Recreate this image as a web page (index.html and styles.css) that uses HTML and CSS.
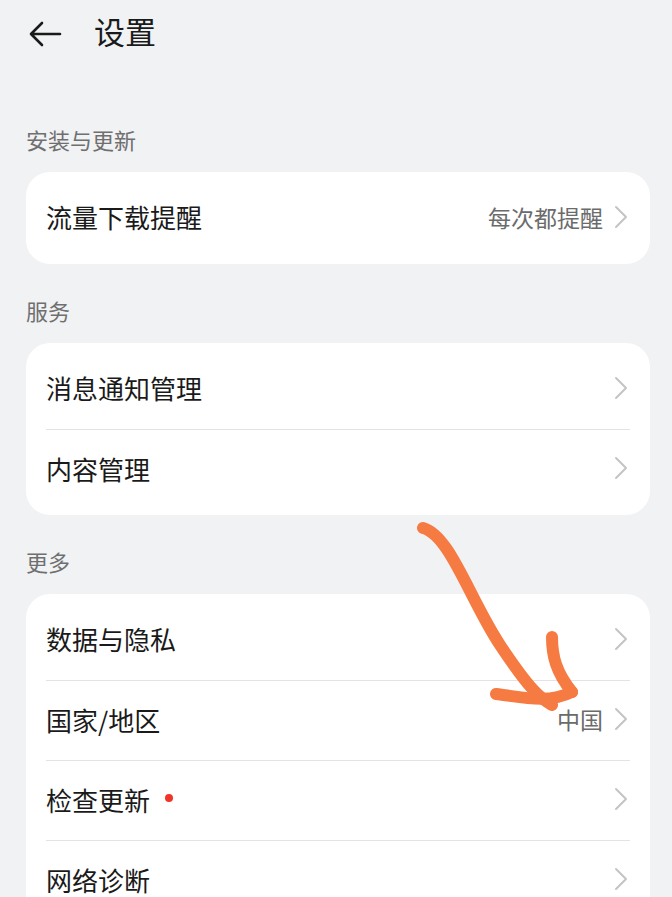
FILE: index.html
```html
<!DOCTYPE html>
<html>
<head>
    <title>设置</title>
    <link rel="stylesheet" href="styles.css">
</head>
<body>
    <div class="header">
        <svg class="back" width="34" height="26" viewBox="0 0 34 26">
            <path d="M32 13 H3 M14 2 L3 13 L14 24" fill="none" stroke="#1a1a1a" stroke-width="2.6" stroke-linecap="round" stroke-linejoin="round"/>
        </svg>
        <span class="title">设置</span>
    </div>

    <div class="section-label">安装与更新</div>
    <div class="card">
        <div class="row">
            <span class="row-text">流量下载提醒</span>
            <span class="row-value">每次都提醒</span>
            <svg class="chevron" width="16" height="24" viewBox="0 0 16 24"><path d="M3 2 L13 12 L3 22" /></svg>
        </div>
    </div>

    <div class="section-label">服务</div>
    <div class="card">
        <div class="row">
            <span class="row-text">消息通知管理</span>
            <svg class="chevron" width="16" height="24" viewBox="0 0 16 24"><path d="M3 2 L13 12 L3 22" /></svg>
        </div>
        <div class="row">
            <span class="row-text">内容管理</span>
            <svg class="chevron" width="16" height="24" viewBox="0 0 16 24"><path d="M3 2 L13 12 L3 22" /></svg>
        </div>
    </div>

    <div class="section-label">更多</div>
    <div class="card">
        <div class="row">
            <span class="row-text">数据与隐私</span>
            <svg class="chevron" width="16" height="24" viewBox="0 0 16 24"><path d="M3 2 L13 12 L3 22" /></svg>
        </div>
        <div class="row">
            <span class="row-text">国家/地区</span>
            <span class="row-value">中国</span>
            <svg class="chevron" width="16" height="24" viewBox="0 0 16 24"><path d="M3 2 L13 12 L3 22" /></svg>
        </div>
        <div class="row">
            <span class="row-text">检查更新<span class="red-dot"></span></span>
            <svg class="chevron" width="16" height="24" viewBox="0 0 16 24"><path d="M3 2 L13 12 L3 22" /></svg>
        </div>
        <div class="row">
            <span class="row-text">网络诊断</span>
            <svg class="chevron" width="16" height="24" viewBox="0 0 16 24"><path d="M3 2 L13 12 L3 22" /></svg>
        </div>
    </div>

    <!-- hand drawn annotation on top of the screenshot -->
    <svg class="scribble" width="672" height="897" viewBox="0 0 672 897">
        <path d="M423 528 C 450 535, 470 600, 500 645 S 540 698, 552 705" />
        <path d="M552 637 C 552 656, 556 672, 572 692" />
        <path d="M496 694 C 522 697, 548 704, 572 692" />
    </svg>
</body>
</html>
```

FILE: styles.css
```css
body {
    font-family: "Noto Sans CJK SC", "Noto Sans", sans-serif;
    background-color: #f1f2f4;
    margin: 0;
    padding: 0;
    overflow: hidden;
}

.header {
    display: flex;
    align-items: center;
    height: 68px;
    padding-left: 28px;
    margin-bottom: 25px;
}

.back {
    display: block;
}

.title {
    font-size: 31px;
    line-height: 36px;
    color: #1a1a1a;
    margin-left: 32px;
    padding-bottom: 7px;
}

.section-label {
    margin-left: 26px;
    padding-top: 31px;
    padding-bottom: 18px;
    font-size: 22px;
    line-height: 30px;
    color: #6f6f6f;
}

.card {
    background-color: white;
    border-radius: 24px;
    margin-left: 26px;
    width: 624px;
    padding: 6px 0;
}

.row {
    display: flex;
    align-items: center;
    height: 80px;
    margin: 0 20px;
    padding-bottom: 3px;
    border-top: 1px solid #e3e3e3;
    box-sizing: border-box;
}

.row:first-child {
    border-top: none;
}

.row-text {
    font-size: 26px;
    color: #1a1a1a;
    margin-right: auto;
    display: flex;
    align-items: center;
}

.row-value {
    font-size: 23px;
    color: #6b6b6b;
    margin-right: 10px;
}

.red-dot {
    width: 8px;
    height: 8px;
    border-radius: 50%;
    background-color: #f0342a;
    margin-left: 15px;
    margin-top: -2px;
}

.chevron {
    display: block;
    margin-right: 1px;
}

.chevron path {
    fill: none;
    stroke: #c4c4c4;
    stroke-width: 2;
    stroke-linecap: round;
    stroke-linejoin: round;
}

.scribble {
    position: absolute;
    left: 0;
    top: 0;
    pointer-events: none;
}

.scribble path {
    fill: none;
    stroke: #f67b42;
    stroke-width: 12;
    stroke-linecap: round;
    stroke-linejoin: round;
}
```
